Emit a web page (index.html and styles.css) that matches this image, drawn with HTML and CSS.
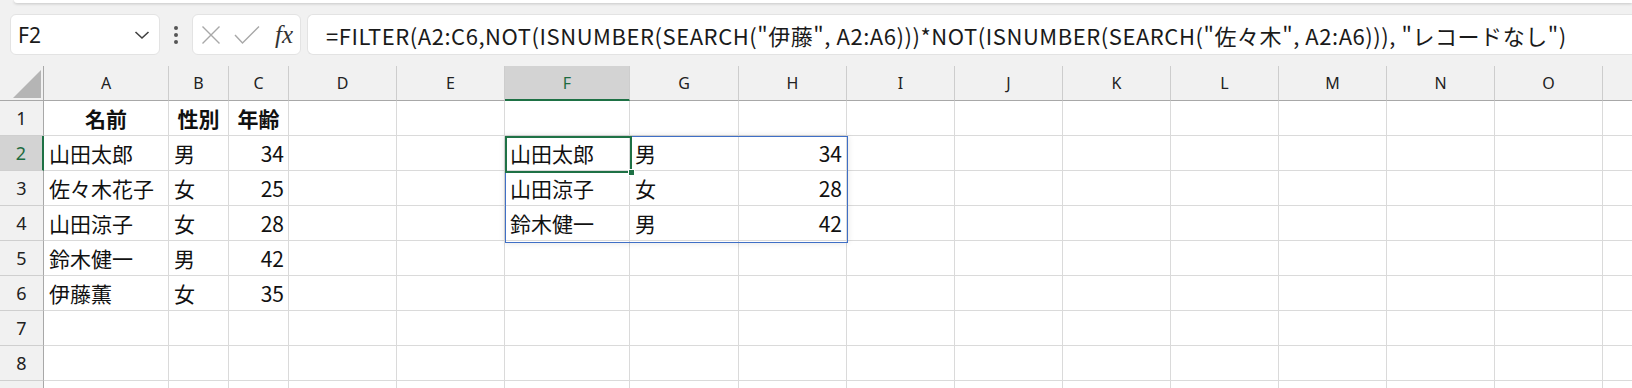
FILE: index.html
```html
<!DOCTYPE html>
<html lang="ja">
<head>
<meta charset="utf-8">
<title>Sheet</title>
<link rel="stylesheet" href="styles.css">
</head>
<body>
<div class="app">
  <div class="topstrip"></div>
  <div class="toolbar">
    <div class="namebox">
      <span class="nb-text">F2</span>
      <svg class="chev" width="16" height="10" viewBox="0 0 16 10"><path d="M1.5 2 L8 8 L14.5 2" fill="none" stroke="#404040" stroke-width="1.6"/></svg>
    </div>
    <div class="dots"><i></i><i></i><i></i></div>
    <div class="fxbox">
      <svg width="20" height="20" viewBox="0 0 20 20"><path d="M1.5 1.5 L18.5 18.5 M18.5 1.5 L1.5 18.5" stroke="#a8a8a8" stroke-width="1.4" fill="none"/></svg>
      <svg width="26" height="20" viewBox="0 0 26 20"><path d="M1 10 L8.5 18 L25 1.5" stroke="#a8a8a8" stroke-width="1.4" fill="none"/></svg>
      <span class="fx">fx</span>
    </div>
    <div class="formula">=FILTER(A2:C6,NOT(ISNUMBER(SEARCH("伊藤", A2:A6)))*NOT(ISNUMBER(SEARCH("佐々木", A2:A6))), "レコードなし")</div>
  </div>
  <div class="sheet">
    <div class="grid">
      <div class="corner"><span class="tri"></span></div>
      <div class="ch">A</div><div class="ch">B</div><div class="ch">C</div><div class="ch">D</div><div class="ch">E</div><div class="ch sel">F</div><div class="ch">G</div><div class="ch">H</div><div class="ch">I</div><div class="ch">J</div><div class="ch">K</div><div class="ch">L</div><div class="ch">M</div><div class="ch">N</div><div class="ch">O</div><div class="ch"></div>

      <div class="rh">1</div>
      <div class="c b ctr">名前</div><div class="c b ctr">性別</div><div class="c b ctr">年齢</div><div class="c"></div><div class="c"></div><div class="c"></div><div class="c"></div><div class="c"></div><div class="c"></div><div class="c"></div><div class="c"></div><div class="c"></div><div class="c"></div><div class="c"></div><div class="c"></div><div class="c"></div>

      <div class="rh sel">2</div>
      <div class="c">山田太郎</div><div class="c">男</div><div class="c num">34</div><div class="c"></div><div class="c"></div><div class="c">山田太郎</div><div class="c">男</div><div class="c num">34</div><div class="c"></div><div class="c"></div><div class="c"></div><div class="c"></div><div class="c"></div><div class="c"></div><div class="c"></div><div class="c"></div>

      <div class="rh">3</div>
      <div class="c">佐々木花子</div><div class="c">女</div><div class="c num">25</div><div class="c"></div><div class="c"></div><div class="c">山田涼子</div><div class="c">女</div><div class="c num">28</div><div class="c"></div><div class="c"></div><div class="c"></div><div class="c"></div><div class="c"></div><div class="c"></div><div class="c"></div><div class="c"></div>

      <div class="rh">4</div>
      <div class="c">山田涼子</div><div class="c">女</div><div class="c num">28</div><div class="c"></div><div class="c"></div><div class="c">鈴木健一</div><div class="c">男</div><div class="c num">42</div><div class="c"></div><div class="c"></div><div class="c"></div><div class="c"></div><div class="c"></div><div class="c"></div><div class="c"></div><div class="c"></div>

      <div class="rh">5</div>
      <div class="c">鈴木健一</div><div class="c">男</div><div class="c num">42</div><div class="c"></div><div class="c"></div><div class="c"></div><div class="c"></div><div class="c"></div><div class="c"></div><div class="c"></div><div class="c"></div><div class="c"></div><div class="c"></div><div class="c"></div><div class="c"></div><div class="c"></div>

      <div class="rh">6</div>
      <div class="c">伊藤薫</div><div class="c">女</div><div class="c num">35</div><div class="c"></div><div class="c"></div><div class="c"></div><div class="c"></div><div class="c"></div><div class="c"></div><div class="c"></div><div class="c"></div><div class="c"></div><div class="c"></div><div class="c"></div><div class="c"></div><div class="c"></div>

      <div class="rh">7</div>
      <div class="c"></div><div class="c"></div><div class="c"></div><div class="c"></div><div class="c"></div><div class="c"></div><div class="c"></div><div class="c"></div><div class="c"></div><div class="c"></div><div class="c"></div><div class="c"></div><div class="c"></div><div class="c"></div><div class="c"></div><div class="c"></div>

      <div class="rh">8</div>
      <div class="c"></div><div class="c"></div><div class="c"></div><div class="c"></div><div class="c"></div><div class="c"></div><div class="c"></div><div class="c"></div><div class="c"></div><div class="c"></div><div class="c"></div><div class="c"></div><div class="c"></div><div class="c"></div><div class="c"></div><div class="c"></div>

      <div class="rh"></div>
      <div class="c"></div><div class="c"></div><div class="c"></div><div class="c"></div><div class="c"></div><div class="c"></div><div class="c"></div><div class="c"></div><div class="c"></div><div class="c"></div><div class="c"></div><div class="c"></div><div class="c"></div><div class="c"></div><div class="c"></div><div class="c"></div>
    </div>
    <div class="spill"></div>
    <div class="active"><span class="handle"></span></div>
  </div>
</div>
</body>
</html>
```

FILE: styles.css
```css
* { box-sizing: border-box; }
html, body { margin: 0; padding: 0; }
body {
  width: 1632px;
  height: 388px;
  overflow: hidden;
  background: #f1f1f1;
  font-family: "Noto Sans CJK JP", "Noto Sans", sans-serif;
  color: #000;
}
.app { position: relative; width: 1632px; height: 388px; overflow: hidden; }
.topstrip {
  height: 3px;
  margin: 0 0 0 14px;
  background: #fff;
  border-radius: 0 0 0 4px;
  box-shadow: 0 1px 3px rgba(0,0,0,0.18);
}
.toolbar {
  display: flex;
  align-items: stretch;
  height: 41px;
  margin-top: 11px;
  padding-left: 10px;
}
.namebox {
  width: 150px;
  background: #fff;
  border: 1px solid #e3e3e3;
  border-radius: 6px;
  display: flex;
  align-items: center;
  justify-content: space-between;
  padding: 0 9px 0 7px;
}
.nb-text {
  font-family: "Noto Sans", sans-serif;
  font-size: 21px;
  color: #1a1a1a;
  line-height: 1;
  padding-top: 1px;
}
.chev { display: block; }
.dots {
  width: 32px;
  display: flex;
  flex-direction: column;
  align-items: center;
  justify-content: center;
  gap: 3px;
}
.dots i {
  display: block;
  width: 4px;
  height: 4px;
  border-radius: 50%;
  background: #555;
}
.fxbox {
  width: 109px;
  background: #fff;
  border: 1px solid #e3e3e3;
  border-radius: 6px;
  display: flex;
  align-items: center;
  padding-left: 8px;
  gap: 13px;
}
.fxbox svg { display: block; }
.fx {
  font-family: "Liberation Serif", serif;
  font-style: italic;
  font-size: 25px;
  color: #333;
  line-height: 1;
  margin-left: 2px;
}
.formula {
  flex: 1;
  min-width: 0;
  margin-left: 6px;
  margin-right: -10px;
  background: #fff;
  border: 1px solid #e3e3e3;
  border-radius: 6px 0 0 6px;
  border-right: none;
  display: flex;
  align-items: center;
  padding-left: 18px;
  font-family: "Noto Sans CJK JP", sans-serif;
  font-size: 22px;
  letter-spacing: 0.55px;
  color: #1a1a1a;
  white-space: nowrap;
  overflow: hidden;
}
.sheet {
  position: absolute;
  left: 0;
  top: 66px;
  width: 1632px;
  height: 322px;
  overflow: hidden;
}
.grid {
  display: grid;
  grid-template-columns: 44px 125px 60px 60px 108px 108px 125px 109px 108px repeat(7, 108px) 108px;
  grid-auto-rows: 35px;
  width: max-content;
  background: #fff;
}
.corner {
  background: #f1f1f1;
  border-right: 1px solid #a8a8a8;
  border-bottom: 1px solid #a8a8a8;
  position: relative;
}
.tri {
  position: absolute;
  left: 13px;
  top: 4px;
  width: 28px;
  height: 28px;
  background: #b5b5b5;
  clip-path: polygon(100% 0, 100% 100%, 0 100%);
}
.ch {
  background: #f1f1f1;
  border-right: 1px solid #cdcdcd;
  border-bottom: 1px solid #a8a8a8;
  display: flex;
  align-items: center;
  justify-content: center;
  font-family: "Noto Sans", sans-serif;
  font-size: 16px;
  color: #222;
  padding-bottom: 1px;
}
.ch.sel {
  background: #d3d3d3;
  border-bottom: 2px solid #1e7145;
  color: #1e6b40;
  padding-bottom: 0;
}
.rh {
  background: #f1f1f1;
  border-right: 1px solid #a8a8a8;
  border-bottom: 1px solid #cfcfcf;
  display: flex;
  align-items: center;
  justify-content: center;
  font-family: "Noto Sans", sans-serif;
  font-size: 18px;
  color: #222;
}
.rh.sel {
  background: #d3d3d3;
  border-right: 2px solid #1e7145;
  color: #1e6b40;
}
.c {
  border-right: 1px solid #dadada;
  border-bottom: 1px solid #dadada;
  display: flex;
  align-items: center;
  padding: 1px 4px 0 5px;
  font-size: 21px;
  line-height: 1;
  white-space: nowrap;
  overflow: visible;
  color: #111;
}
.c.b { font-weight: 700; }
.c.ctr { justify-content: center; padding-left: 0; padding-right: 0; }
.c.num { justify-content: flex-end; }
.spill {
  position: absolute;
  left: 505px;
  top: 70px;
  width: 343px;
  height: 107px;
  border: 1px solid #3f6fc6;
  box-shadow: 0 0 6px rgba(0,0,0,0.12);
  pointer-events: none;
}
.active {
  position: absolute;
  left: 505px;
  top: 70px;
  width: 127px;
  height: 37px;
  border: 2px solid #1e7145;
}
.handle {
  position: absolute;
  right: -5px;
  bottom: -5px;
  width: 7px;
  height: 7px;
  background: #1e7145;
  border: 1px solid #fff;
}
```
